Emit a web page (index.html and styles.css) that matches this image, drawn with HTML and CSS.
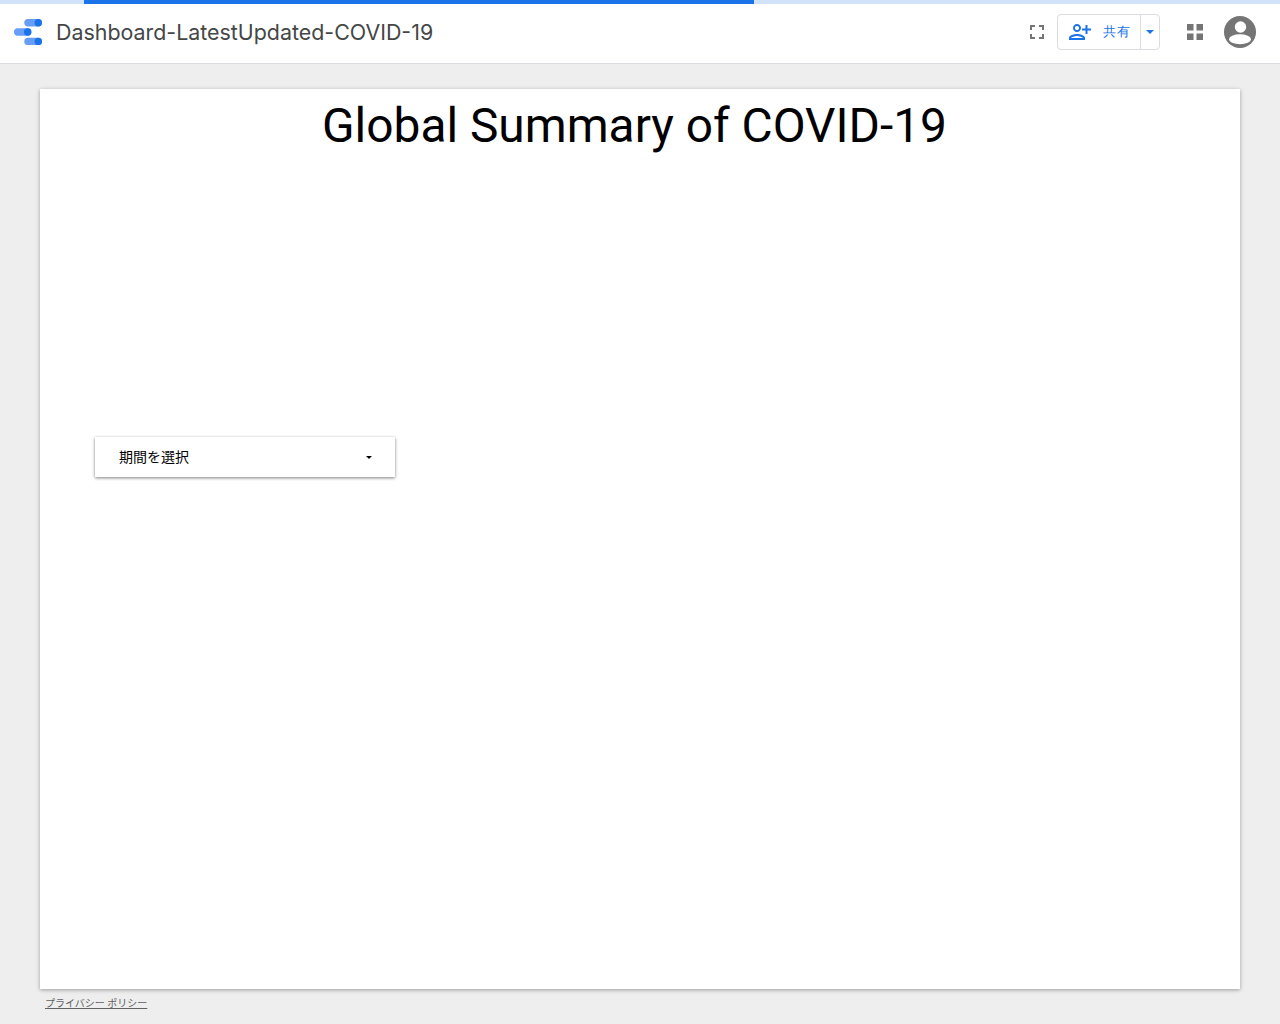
FILE: index.html
```html
<!DOCTYPE html>
<html lang="ja">
  <head>
    <title>Dashboard-LatestUpdated-COVID-19</title>
    <link rel="stylesheet" href="styles.css">
  </head>
  <body>
    <div class="progress"><div class="progressFill"></div></div>
    <header class="topBar">
      <svg class="logo" width="30" height="30" viewBox="0 0 30 30">
        <rect x="10.3" y="2" width="17.7" height="7.4" rx="3.7" fill="#669df6"/>
        <circle cx="24.3" cy="5.7" r="3.7" fill="#1a73e8"/>
        <rect x="0" y="11.3" width="17.4" height="7.4" rx="3.7" fill="#669df6"/>
        <circle cx="13.7" cy="15" r="3.7" fill="#1a73e8"/>
        <rect x="10.3" y="20.7" width="17.7" height="7.4" rx="3.7" fill="#669df6"/>
        <circle cx="24.3" cy="24.4" r="3.7" fill="#1a73e8"/>
      </svg>
      <div class="docTitle">Dashboard-LatestUpdated-COVID-19</div>
      <svg class="fullscreen" width="14" height="14" viewBox="0 0 14 14">
        <path d="M0 5V0h5v2H2v3zM9 0h5v5h-2V2H9zM0 9h2v3h3v2H0zM12 9h2v5H9v-2h3z" fill="#757575"/>
      </svg>
      <div class="shareGroup">
        <button class="shareButton">
          <svg width="24" height="24" viewBox="0 0 24 24">
            <path d="M15 12c2.200 0 4-1.800 4-4s-1.800-4-4-4-4 1.800-4 4 1.800 4 4 4zm0-6.100c1.160 0 2.100.94 2.100 2.100s-.94 2.100-2.100 2.100-2.100-.94-2.100-2.100.94-2.100 2.100-2.100zM15 14c-2.700 0-8 1.340-8 4v2h16v-2c0-2.660-5.300-4-8-4zm-6.100 4.100c.3-.9 3.900-2.200 6.100-2.200s5.800 1.300 6.100 2.200z" transform="translate(-6 0)" fill="#1a73e8"/>
            <path d="M17.500 14v-3.500H14v-2h3.500V5h2v3.500H23v2h-3.500V14z" fill="#1a73e8"/>
          </svg>
          <span class="shareLabel">共有</span>
        </button>
        <button class="shareArrow"><span class="arrowBlue"></span></button>
      </div>
      <svg class="apps" width="16" height="16" viewBox="0 0 16 16">
        <path d="M0 0h6.500v6.500H0zM9.500 0H16v6.500H9.500zM0 9.500h6.500V16H0zM9.500 9.500H16V16H9.500z" fill="#757575"/>
      </svg>
      <svg class="avatar" width="32" height="32" viewBox="0 0 32 32">
        <circle cx="16" cy="16" r="16" fill="#757575"/>
        <circle cx="16.500" cy="11" r="5.700" fill="#fff"/>
        <ellipse cx="16" cy="23.300" rx="11" ry="5" fill="#fff"/>
      </svg>
    </header>
    <main class="page">
      <section class="report">
        <h1 class="reportTitle">Global Summary of COVID-19</h1>
        <div class="dateSelect">
          <span class="dateLabel">期間を選択</span>
          <span class="arrowBlack"></span>
        </div>
      </section>
      <a class="privacy" href="#">プライバシー ポリシー</a>
    </main>
  </body>
</html>
```

FILE: styles.css
```css
:root {
  --pagecolor: #eeeeee;
  --bluecolor: #1a73e8;
  --greycolor: #757575;
  --linecolor: #dadce0;
}

* {
  box-sizing: border-box;
}

html, body {
  margin: 0;
  height: 1024px;
  overflow: hidden;
}

body {
  background: var(--pagecolor);
  font-family: Roboto, "Noto Sans CJK JP", sans-serif;
}

.progress {
  height: 4px;
  background: #d0e3fa;
}

.progressFill {
  width: 670px;
  height: 4px;
  margin-left: 84px;
  background: var(--bluecolor);
}

.topBar {
  display: flex;
  align-items: center;
  height: 60px;
  background: #fff;
  border-bottom: 1px solid var(--linecolor);
  padding-bottom: 3px;
}

.logo {
  margin-left: 14px;
  flex: none;
}

.docTitle {
  margin-left: 12px;
  flex: 1;
  font-family: Inter, Roboto, sans-serif;
  font-size: 21.4px;
  color: #444746;
}

.fullscreen {
  flex: none;
  margin-right: 13px;
}

.shareGroup {
  display: flex;
  width: 103px;
  height: 36px;
  border: 1px solid var(--linecolor);
  border-radius: 4px;
}

.shareButton {
  display: flex;
  align-items: center;
  width: 83px;
  padding: 0 0 0 10px;
  background: none;
  border: none;
  border-right: 1px solid var(--linecolor);
}

.shareLabel {
  margin-left: 11px;
  font-size: 13px;
  letter-spacing: 1px;
  color: var(--bluecolor);
}

.shareArrow {
  flex: 1;
  padding: 0;
  background: none;
  border: none;
}

.arrowBlue {
  display: block;
  width: 0;
  margin: 0 auto;
  border-left: 4px solid transparent;
  border-right: 4px solid transparent;
  border-top: 4px solid var(--bluecolor);
}

.apps {
  flex: none;
  margin-left: 27px;
}

.avatar {
  flex: none;
  margin: 0 24px 0 21px;
}

.page {
  padding: 25px 40px 0;
}

.report {
  height: 900px;
  padding-top: 9px;
  background: #fff;
  box-shadow: 0 1px 4px rgba(0, 0, 0, 0.35);
}

.reportTitle {
  margin: 0 11px 0 0;
  height: 56px;
  font-size: 47.85px;
  font-weight: 400;
  line-height: 56px;
  text-align: center;
  color: #000;
}

.dateSelect {
  display: flex;
  align-items: center;
  justify-content: space-between;
  width: 300px;
  height: 40px;
  margin: 283px 0 0 55px;
  padding: 0 23px 2px 24px;
  background: #fff;
  box-shadow: 0 1px 3px rgba(0, 0, 0, 0.5);
}

.dateLabel {
  font-size: 14px;
  color: #000;
}

.arrowBlack {
  width: 0;
  margin-top: 2px;
  border-left: 3px solid transparent;
  border-right: 3px solid transparent;
  border-top: 3px solid #000;
}

.privacy {
  display: inline-block;
  margin: 8px 0 0 5px;
  font-size: 10px;
  line-height: 14px;
  color: #616161;
}
```
